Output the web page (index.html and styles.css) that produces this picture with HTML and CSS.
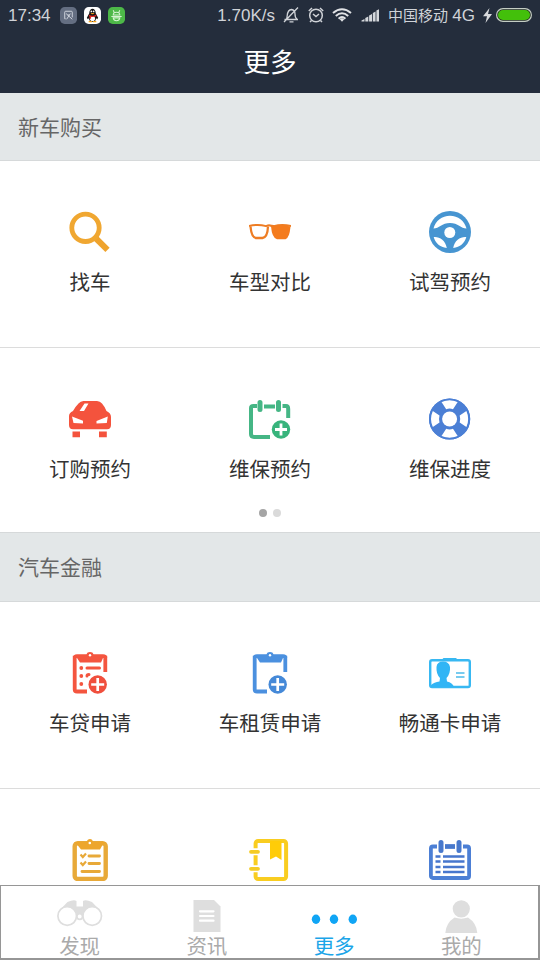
FILE: index.html
```html
<!DOCTYPE html>
<html lang="zh-CN">
<head>
<meta charset="utf-8">
<title>更多</title>
<link rel="stylesheet" href="styles.css">
</head>
<body>
<div class="app">
  <header class="top">
    <div class="status">
      <div class="status-left">
        <span class="clock">17:34</span>
        <svg class="badge" viewBox="0 0 18 18"><rect width="18" height="18" rx="5" fill="#646e82"/><g fill="none" stroke="#d5d9e1" stroke-width="1"><path d="M6 12.500H5V5.500Q5 4.500 6 4.500H12Q13 4.500 13 5.500V11"/><path d="M6.500 7l6.500 6M11 7l-4 6M8 8.500h2"/></g></svg>
        <svg class="badge" viewBox="0 0 18 18"><rect width="18" height="18" rx="5" fill="#fff"/><path d="M5.500 7C5.500 0 12.500 0 12.500 7L15 11.500L14 13L12.800 12Q12.500 15.800 9 15.800T5.200 12L4 13L3 11.500Z" fill="#151515"/><ellipse cx="9" cy="12.300" rx="2.700" ry="2.800" fill="#fff"/><circle cx="7.800" cy="4.700" r=".9" fill="#fff"/><circle cx="10.200" cy="4.700" r=".9" fill="#fff"/><ellipse cx="9" cy="7" rx="2" ry=".7" fill="#f6a31b"/><path d="M5 8Q9 10.500 13 8V9.800Q10 11 7.500 10.500V12.500H5.800V10Z" fill="#e52a25"/><path d="M5 15.500h3.500M9.500 15.500H13" stroke="#f6a31b" stroke-width="1.400"/></svg>
        <svg class="badge" viewBox="0 0 18 18"><rect width="18" height="18" rx="5" fill="#4db848"/><g fill="none" stroke="#d6f3d2" stroke-width="1.100"><path d="M5.500 8.500C5.500 4.500 12.500 4.500 12.500 8.500ZM6.500 5.500L5.500 3.500M11.500 5.500L12.500 3.500M3.500 10h11M5.500 11.500Q6 14.500 9 14.500T12.500 11.500Z"/></g></svg>
      </div>
      <div class="status-right">
        <span>1.70K/s</span>
        <svg class="bell" viewBox="0 0 16 18"><path d="M1.500 13.500H15M3.500 13C5 10 3 4 8.500 3.500Q12 4 12 8T14 13M6.500 15.800h4M15 1.500L1 16" fill="none" stroke="#d0d3d8" stroke-width="1.300"/></svg>
        <svg class="alarm" viewBox="0 0 18 18"><g fill="none" stroke="#d0d3d8" stroke-width="1.500"><circle cx="9" cy="9.500" r="6.300"/><path d="M6 8l3 2.500L12 8M1.800 5L5 2M16.200 5L13 2M4.500 14.500L3 16M13.500 14.500L15 16"/></g></svg>
        <svg class="wifi" viewBox="0 0 20 14"><g fill="none" stroke="#e0e2e5" stroke-width="2"><path d="M1 5Q10-2.500 19 5M3.800 8Q10 2.500 16.200 8M6.600 10.700Q10 7.500 13.400 10.700"/></g><path d="M7.800 11.200Q10 9.500 12.200 11.200L10 13.800Z" fill="#e0e2e5"/></svg>
        <svg class="signal" viewBox="0 0 19 13"><path d="M.5 11.500L3.500 10V12.500H.5ZM4.300 9L7.300 7.500V12.500H4.300ZM8.100 6.500L11 5V12.500H8.100ZM11.800 4L14.600 2.500V12.500H11.800ZM15.400 1.500L18 .3V12.500H15.400Z" fill="#d4d7db"/></svg>
        <span class="carrier">中国移动 <span class="net">4G</span></span>
        <svg class="bolt" viewBox="0 0 9 15"><path d="M6.500 0L0 8.200H4L2.500 15L9 6H5Z" fill="#d8dadd"/></svg>
        <svg class="battery" viewBox="0 0 36 14"><rect x=".6" y=".6" width="34.800" height="12.800" rx="6.400" fill="#202b23" stroke="#c4cdc4" stroke-width="1.200"/><rect x="2" y="2" width="32" height="10" rx="5" fill="#43c00b"/></svg>
      </div>
    </div>
    <h1 class="title">更多</h1>
  </header>

  <main class="content">
    <h2 class="section-head">新车购买</h2>
    <div class="row">
      <div class="cell">
        <svg class="icon" viewBox="0 0 42 42"><path d="M26 26.500L38.500 38.800" stroke="#efa32d" stroke-width="6"/><circle cx="16.500" cy="16.800" r="13.700" fill="none" stroke="#f0a731" stroke-width="4.800"/></svg>
        <span class="label">找车</span>
      </div>
      <div class="cell">
        <svg class="icon" viewBox="0 0 42 42"><path d="M0 15Q9 12.800 17 15.100Q19.800 14 21 14.500T24.800 15.100Q33 12.800 42 15" fill="none" stroke="#ee7d24" stroke-width="2"/><path d="M1.500 15.500Q2.500 26.500 7 27H13.500Q18.500 26.500 19 15.500" fill="none" stroke="#ee7d24" stroke-width="2.300"/><path d="M22 15.500Q31 13 41.500 15.500Q40.500 27 36.500 28.200H28Q23 27 22 15.500Z" fill="#f47b1d"/></svg>
        <span class="label">车型对比</span>
      </div>
      <div class="cell">
        <svg class="icon" viewBox="0 0 42 42"><circle cx="21" cy="21" r="21" fill="#4795d1"/><path d="M4.500 17.500C6.500 9.800 13 4.800 21 4.800S35.500 9.800 37.500 17.500C32 17.500 29 12 21 12S10 17.500 4.500 17.500ZM4.700 26C10 25.300 16.500 29 17.800 37C11 36.500 6 31.500 4.700 26ZM37.300 26C32 25.300 25.500 29 24.200 37C31 36.500 36 31.500 37.300 26Z" fill="#fff"/><circle cx="20.800" cy="21.500" r="5.500" fill="#fff"/></svg>
        <span class="label">试驾预约</span>
      </div>
    </div>
    <div class="row row-second">
      <div class="cell">
        <svg class="icon" viewBox="0 0 42 42"><path d="M0 18Q0 15 4 13Q6.500 8.500 9.500 5.500Q11.500 3 14.500 3H28Q31 3 33 5.500Q36 9 37.500 13Q42 15 42 19V27Q42 31.200 38 31.200H4Q0 31.200 0 27ZM3.500 33.500H11V39.200H3.500ZM30 33.500H37.800V39.200H30Z" fill="#f4533d"/><path d="M15.500 5.500H19.500L15 13H10.500ZM3 18.500L14 22.800V25.500L4.500 25ZM38.800 18.500L27.500 23V25.500L37.800 25Z" fill="#fff"/></svg>
        <span class="label">订购预约</span>
      </div>
      <div class="cell">
        <svg class="icon" viewBox="0 0 42 42"><g fill="none" stroke="#45b685"><path d="M8 8H4.500Q2 8 2 10V36Q2 38.900 5 38.900H21M15 8.500H26M33.500 8H37Q39.200 8 39.200 11V20" stroke-width="4"/><path d="M11 4.500V11.500M29.500 4.500V11.500" stroke-width="5" stroke-linecap="round"/></g><circle cx="32" cy="31.500" r="9.200" fill="#38b47c"/><path d="M32 25.500V37.500M26 31.500H38" stroke="#fff" stroke-width="2.800"/></svg>
        <span class="label">维保预约</span>
      </div>
      <div class="cell">
        <svg class="icon" viewBox="0 0 42 42"><circle cx="20.600" cy="21" r="20.600" fill="#4b7fd5"/><path d="M12.500 4Q20.600.5 28.700 4L24 11.200Q20.600 9.800 17.200 11.200ZM12.500 38Q20.600 41.500 28.700 38L24 30.800Q20.600 32.200 17.200 30.800ZM3.800 13L10.500 17.500Q9.500 21 10.500 24.500L3.800 29Q.2 21 3.800 13ZM37.400 13L30.700 17.500Q31.700 21 30.700 24.500L37.400 29Q41 21 37.400 13Z" fill="#fff"/><circle cx="20.600" cy="21" r="19.800" fill="none" stroke="#4b7fd5" stroke-width="1.600"/><circle cx="20.600" cy="21" r="7.500" fill="#fff"/></svg>
        <span class="label">维保进度</span>
      </div>
      <div class="dots"><i class="dot dot-on"></i><i class="dot"></i></div>
    </div>

    <h2 class="section-head section-second">汽车金融</h2>
    <div class="row">
      <div class="cell">
        <svg class="icon" viewBox="0 0 42 42"><path d="M5.700 3.800V37.500Q5.700 39.500 8 39.500H18M36.300 20V3.800" fill="none" stroke="#f4553f" stroke-width="3.800"/><path d="M4 6Q4 2.300 8 2.300H17.500Q18 0 21 0T24.500 2.300H34Q38.200 2.300 38.200 6H34L32 10.500H11L8 6Z" fill="#f4553f"/><circle cx="21" cy="3.200" r="1.200" fill="#fff"/><path d="M18 16H30.500M18 24Q18 22.500 20 22.500" stroke="#f4553f" stroke-width="3" stroke-linecap="round" fill="none"/><g fill="#f4553f"><circle cx="12.300" cy="16" r="1.900"/><circle cx="12.300" cy="24" r="1.900"/><circle cx="12.300" cy="32" r="1.900"/></g><circle cx="28.700" cy="32.500" r="11" fill="#fff"/><circle cx="28.700" cy="32.500" r="9.200" fill="#f04f3d"/><path d="M28.700 26V39M22.200 32.500H35.200" stroke="#fff" stroke-width="2.700"/></svg>
        <span class="label">车贷申请</span>
      </div>
      <div class="cell">
        <svg class="icon" viewBox="0 0 42 42"><path d="M5.700 3.800V37.500Q5.700 39.500 8 39.500H18M36.300 20V3.800" fill="none" stroke="#4b90df" stroke-width="3.800"/><path d="M4 6Q4 2.300 8 2.300H17.500Q18 0 21 0T24.500 2.300H34Q38.200 2.300 38.200 6H34L32 10.500H11L8 6Z" fill="#4b90df"/><circle cx="21" cy="3.200" r="1.200" fill="#fff"/><circle cx="28.700" cy="32.500" r="11" fill="#fff"/><circle cx="28.700" cy="32.500" r="9.200" fill="#4589d8"/><path d="M28.700 26V39M22.200 32.500H35.200" stroke="#fff" stroke-width="2.700"/></svg>
        <span class="label">车租赁申请</span>
      </div>
      <div class="cell">
        <svg class="icon" viewBox="0 0 42 42"><rect x="1.200" y="8.200" width="39.600" height="26.800" rx="1.800" fill="#fff" stroke="#38b8f2" stroke-width="2.400"/><path d="M12 8.500L14.500 6H27L29.500 8.500Z" fill="#38b8f2"/><path d="M27 21H35.500M27 25H35.500" stroke="#4bbbea" stroke-width="1.400"/><path d="M2 35V33Q5 30 10.500 29.500L11 26Q7 22 7.500 15Q8 9.500 14 9.500T21 15Q21.500 22 17.500 26L18 29.500Q23.500 30.500 25 35Z" fill="#31b5f5"/></svg>
        <span class="label">畅通卡申请</span>
      </div>
    </div>
    <div class="row row-last">
      <div class="cell">
        <svg class="icon" viewBox="0 0 42 42"><rect x="5.700" y="4.200" width="31" height="35.800" rx="3" fill="none" stroke="#e8a938" stroke-width="4.400"/><path d="M5 3H17.500Q18.500 0 21 0T24 3H37L33.500 6L31 10.500H12L8.500 6Z" fill="#eda62d"/><circle cx="20.800" cy="4" r="1.300" fill="#fff"/><path d="M20 17H30.500M20 24.500H30.500M13 32.500H30.500" stroke="#e8a938" stroke-width="2.900" stroke-linecap="round"/><path d="M11.500 15.500L13.800 18L17 14.500M11.500 23.500L13.800 26L17 22.500" fill="none" stroke="#e8a938" stroke-width="2.200"/></svg>
      </div>
      <div class="cell">
        <svg class="icon" viewBox="0 0 42 42"><rect x="6.600" y="2" width="30.500" height="38" rx="2.500" fill="none" stroke="#f9cd20" stroke-width="4"/><path d="M0 12.800H12M0 29.800H12" stroke="#fff" stroke-width="7"/><path d="M2 12.800H9M2 29.800H9" stroke="#f5cb22" stroke-width="3.800" stroke-linecap="round"/><path d="M21 2H32.500V21L27 17.500L21 20.500Z" fill="#ffcc08"/></svg>
      </div>
      <div class="cell">
        <svg class="icon" viewBox="0 0 42 42"><rect x="1.900" y="7.500" width="38.200" height="31.500" rx="2" fill="none" stroke="#4c7fd5" stroke-width="3.800"/><path d="M12 1V13M30 1V13" stroke="#fff" stroke-width="8"/><path d="M12 3.500V11.500M30 3.500V11.500" stroke="#4878cc" stroke-width="5" stroke-linecap="round"/><path d="M16 7.500H26" stroke="#4878cc" stroke-width="4.500"/><path d="M6.500 17.500H11.500M14 17.500H35.500M6.500 22.500H11.500M14 22.500H35.500M6.500 28H11.500M14 28H35.500M6.500 33H11.500M14 33H35.500" stroke="#4776cd" stroke-width="2.600"/></svg>
      </div>
    </div>
  </main>

  <nav class="tabs">
    <div class="tab">
      <svg class="tab-icon" viewBox="0 0 46 34"><path d="M2 12L10.500 3Q17 0 19.500 2V7.500H26V2Q28.500 0 35 3L43.500 12L35 18H10Z" fill="#dedede"/><g fill="#fff" stroke="#dedede" stroke-width="1.700"><circle cx="10.200" cy="17" r="9.300"/><circle cx="35.200" cy="17" r="9.300"/><circle cx="22.700" cy="17.500" r="2.800"/></g></svg>
      <span>发现</span>
    </div>
    <div class="tab">
      <svg class="tab-icon" viewBox="0 0 46 34"><path d="M9.500 1H30L36.500 7.500V33H9.500Z" fill="#dedede"/><path d="M16 12.300H29.500M16 17H29.500M16 21.700H29.500" stroke="#fff" stroke-width="2.200" stroke-linecap="round"/></svg>
      <span>资讯</span>
    </div>
    <div class="tab tab-on">
      <svg class="tab-icon" viewBox="0 0 46 34"><g fill="#10a5f5"><ellipse cx="5" cy="20.300" rx="4.200" ry="4.700"/><ellipse cx="23" cy="20.300" rx="4.200" ry="4.700"/><ellipse cx="41.800" cy="20.300" rx="4.200" ry="4.700"/></g></svg>
      <span>更多</span>
    </div>
    <div class="tab">
      <svg class="tab-icon" viewBox="0 0 46 34"><circle cx="23.300" cy="9.800" r="8.600" fill="#dedede"/><path d="M7.300 34Q8 24 16.500 18.500Q23.300 20.800 30 18.500Q38.600 24 39.300 34Z" fill="#dedede"/></svg>
      <span>我的</span>
    </div>
  </nav>
</div>
</body>
</html>
```
FILE: styles.css
```css
* {
  box-sizing: border-box;
}

body {
  margin: 0;
  background: #fff;
  font-family: "Liberation Sans", "Noto Sans CJK SC", sans-serif;
}

svg {
  display: block;
  flex: none;
}

.app {
  display: flex;
  flex-direction: column;
  width: 540px;
  height: 960px;
  overflow: hidden;
}

.top {
  flex: none;
  height: 93px;
  background: #242d3c;
}

.status {
  display: flex;
  justify-content: space-between;
  height: 31px;
  padding: 0 8px;
  color: #d0d3d8;
  font-size: 17px;
  line-height: 31px;
  white-space: nowrap;
}

.status-left,
.status-right {
  display: flex;
  align-items: center;
  height: 30px;
}

.clock {
  width: 46px;
}

.badge {
  width: 17px;
  height: 17px;
  margin: 0 1px 0 6px;
}

.bell {
  width: 16px;
  height: 18px;
  margin-left: 8px;
}

.alarm {
  width: 18px;
  height: 18px;
  margin-left: 8px;
}

.wifi {
  width: 20px;
  height: 14px;
  margin-left: 7px;
}

.signal {
  width: 19px;
  height: 13px;
  margin: 0 8px 0 9px;
}

.carrier {
  width: 88px;
  font-size: 15px;
}

.net {
  font-size: 17px;
}

.bolt {
  width: 9px;
  height: 15px;
  margin: 0 4px 0 7px;
}

.battery {
  width: 36px;
  height: 14px;
}

.title {
  margin: 0;
  color: #fff;
  font-size: 26.500px;
  font-weight: 400;
  line-height: 64px;
  text-align: center;
}

.content {
  flex: 1;
  min-height: 0;
  overflow: hidden;
}

.section-head {
  height: 68px;
  margin: 0;
  padding-left: 18px;
  border-bottom: 1px solid #d6d9da;
  background: #e3e7e8;
  color: #666;
  font-size: 21px;
  font-weight: 400;
  line-height: 69px;
}

.section-second {
  height: 70px;
  border-top: 1px solid #d6d9da;
  line-height: 70px;
}

.row {
  display: grid;
  grid-template-columns: repeat(3, 1fr);
  align-content: start;
  height: 187px;
  padding-top: 50px;
  border-bottom: 1px solid #dcdcdc;
}

.row-second {
  height: 184px;
  border-bottom: 0;
}

.cell {
  display: flex;
  flex-direction: column;
  align-items: center;
}

.icon {
  width: 42px;
  height: 42px;
}

.label {
  margin-top: 15px;
  color: #333;
  font-size: 20.500px;
  line-height: 30px;
}

.dots {
  grid-column: 1 / -1;
  display: flex;
  justify-content: center;
  gap: 6px;
  margin-top: 24px;
}

.dot {
  width: 8px;
  height: 8px;
  border-radius: 50%;
  background: #dadada;
}

.dot-on {
  background: #a5a5a5;
}

.tabs {
  flex: none;
  display: grid;
  grid-template-columns: repeat(4, 1fr);
  height: 75px;
  padding: 13px 13px 0 15px;
  border: 1px solid #969696;
  border-right-width: 2px;
  border-bottom-width: 2px;
  background: #fff;
}

.tab {
  display: flex;
  flex-direction: column;
  align-items: center;
  color: #aaa;
  font-size: 20.500px;
  line-height: 27px;
}

.tab-icon {
  width: 46px;
  height: 34px;
}

.tab-on {
  color: #1ba5e8;
}
```
